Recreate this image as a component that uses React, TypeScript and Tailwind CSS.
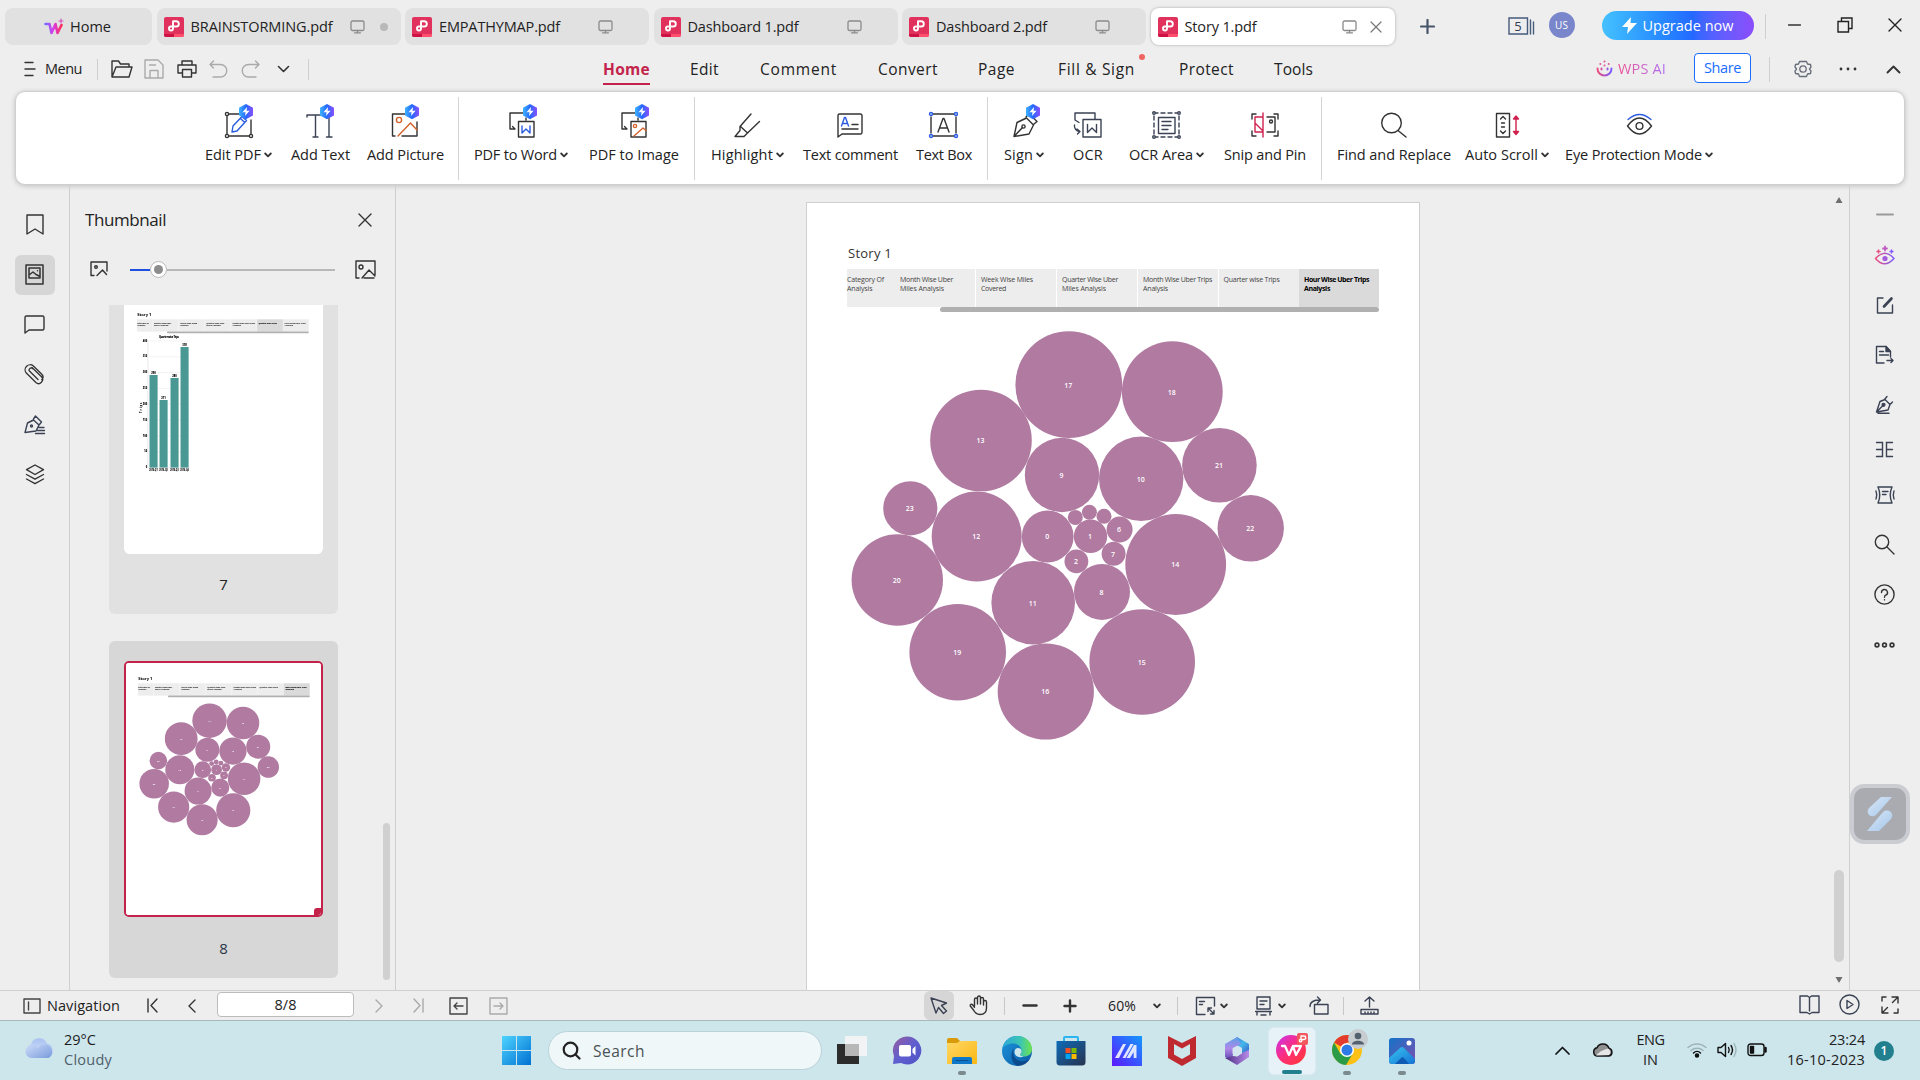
import React, { useLayoutEffect, useRef } from 'react';

/** Single line of text whose letter spacing is adjusted to fill the width set by its classes. */
function Fit({ children, className = '' }: { children: string; className?: string }) {
  const outer = useRef<HTMLDivElement>(null);
  const inner = useRef<HTMLSpanElement>(null);
  useLayoutEffect(() => {
    const o = outer.current;
    const s = inner.current;
    if (!o || !s) return;
    s.style.letterSpacing = '0px';
    const box = o.getBoundingClientRect().width;
    const scale = box / o.offsetWidth || 1;
    const gap = (box - s.getBoundingClientRect().width) / scale / children.length;
    s.style.letterSpacing = gap.toFixed(3) + 'px';
  }, [children]);
  return (
    <div ref={outer} className={'shrink-0 whitespace-nowrap ' + className}>
      <span ref={inner} className="inline-block">{children}</span>
    </div>
  );
}

type SvgProps = { w: number; h: number; c?: string; s?: string; sw?: number; children: React.ReactNode; box?: string };
function Svg({ w, h, c = '', s = '#333', sw = 1.4, children, box }: SvgProps) {
  return (
    <svg width={w} height={h} viewBox={box || `0 0 ${w} ${h}`} className={'shrink-0 ' + c} fill="none" stroke={s} strokeWidth={sw} strokeLinecap="round" strokeLinejoin="round">
      {children}
    </svg>
  );
}

const Gradients = () => (
  <svg width="0" height="0" className="absolute">
    <defs>
      <linearGradient id="badge" x1="0" x2="1"><stop offset="0" stopColor="#3fb4ff" /><stop offset=".5" stopColor="#2468ff" /><stop offset="1" stopColor="#8b50ff" /></linearGradient>
      <linearGradient id="wps" x1="0" x2="1"><stop offset="0" stopColor="#7a6cff" /><stop offset=".5" stopColor="#d83ce8" /><stop offset="1" stopColor="#ff2d55" /></linearGradient>
      <linearGradient id="ai" x1="0" x2="1"><stop offset="0" stopColor="#f04e7a" /><stop offset="1" stopColor="#7a5cff" /></linearGradient>
      <linearGradient id="cloud" x1="0" y1="0" x2="0" y2="1"><stop offset="0" stopColor="#a9c2f2" /><stop offset="1" stopColor="#dbe4f9" /></linearGradient>
      <linearGradient id="cloud2" x1="0" y1="0" x2="1" y2="1"><stop offset="0" stopColor="#d4e0fa" /><stop offset="1" stopColor="#5f88d4" /></linearGradient>
      <linearGradient id="win" gradientUnits="userSpaceOnUse" x1="0" y1="0" x2="29" y2="29"><stop offset="0" stopColor="#4fd4ff" /><stop offset="1" stopColor="#0070d2" /></linearGradient>
      <linearGradient id="chat" x1="0" y1="0" x2="1" y2="1"><stop offset="0" stopColor="#9a5a9c" /><stop offset=".5" stopColor="#5f5fd0" /><stop offset="1" stopColor="#4f52c4" /></linearGradient>
      <linearGradient id="folder" x1="0" y1="0" x2="1" y2="1"><stop offset="0" stopColor="#ffd766" /><stop offset="1" stopColor="#fbb813" /></linearGradient>
      <linearGradient id="edge1" x1="0" x2="1"><stop offset="0" stopColor="#2ba7d8" /><stop offset=".6" stopColor="#3cc5b4" /><stop offset="1" stopColor="#6fe34d" /></linearGradient>
      <linearGradient id="edge2" x1="0" y1="0" x2="1" y2="1"><stop offset="0" stopColor="#1c96dd" /><stop offset="1" stopColor="#0b5aa5" /></linearGradient>
      <linearGradient id="store" x1="0" y1="0" x2="1" y2="1"><stop offset="0" stopColor="#0e6cb8" /><stop offset="1" stopColor="#28324f" /></linearGradient>
      <linearGradient id="asus" x1="0" y1="1" x2="1" y2="0"><stop offset="0" stopColor="#5c18ff" /><stop offset="1" stopColor="#1398ff" /></linearGradient>
      <linearGradient id="wpsapp" x1="0" y1="0" x2="1" y2="1"><stop offset="0" stopColor="#c632f2" /><stop offset=".5" stopColor="#ff2d78" /><stop offset="1" stopColor="#ff3b30" /></linearGradient>
      <linearGradient id="photos" x1="0" y1="0" x2="1" y2="1"><stop offset="0" stopColor="#1273c8" /><stop offset="1" stopColor="#7e4fae" /></linearGradient>
      <linearGradient id="hill" x1="0" y1="0" x2="1" y2="1"><stop offset="0" stopColor="#36c5f0" /><stop offset="1" stopColor="#1672d4" /></linearGradient>
      <linearGradient id="glass" x1="0" y1="0" x2="1" y2="1"><stop offset="0" stopColor="#d9e8f6" /><stop offset="1" stopColor="#a5c6ec" /></linearGradient>
      <linearGradient id="m1" x1="0" y1="0" x2="1" y2="1"><stop offset="0" stopColor="#3a6fd8" /><stop offset=".5" stopColor="#43b8ea" /><stop offset="1" stopColor="#3a50c8" /></linearGradient>
      <linearGradient id="m2" x1="0" y1="0" x2="0" y2="1"><stop offset="0" stopColor="#5aa0e8" /><stop offset=".5" stopColor="#b088e8" /><stop offset="1" stopColor="#5c48b0" /></linearGradient>
      <linearGradient id="m3" x1="0" y1="0" x2="1" y2="0"><stop offset="0" stopColor="#4b2f86" /><stop offset="1" stopColor="#b98ae8" /></linearGradient>
    </defs>
  </svg>
);

const PdfIcon = () => (
  <Svg w={20} h={20} s="none">
    <rect width="20" height="20" rx="2" fill="#e0325c" />
    <path d="M0 17h10v3H2a2 2 0 0 1-2-2z" fill="#cf1244" />
    <path d="M10 17h10v1a2 2 0 0 1-2 2h-8z" fill="#ff4f6d" />
    <path d="M9 8.500V4.300h3.200a2.600 2.600 0 0 1 0 5.200H6.800a2 2 0 1 0 2.200 2V8" fill="none" stroke="#fff" strokeWidth="1.900" />
  </Svg>
);

const Monitor = ({ c }: { c: string }) => (
  <Svg w={15} h={14} s="#8b8b8b" sw={1.3} c={c}>
    <rect x="1" y="1" width="13" height="9.500" rx="1.500" /><path d="M7.500 10.500v2M4.500 12.800h6" />
  </Svg>
);

const tabs = [
  { name: 'BRAINSTORMING.pdf', w: 'w-[142px]', gap: 'ml-[17px]', dot: true },
  { name: 'EMPATHYMAP.pdf', w: 'w-[121px]', gap: 'ml-[38px]' },
  { name: 'Dashboard 1.pdf', w: 'w-[111px]', gap: 'ml-[48px]' },
  { name: 'Dashboard 2.pdf', w: 'w-[111px]', gap: 'ml-[48px]' },
  { name: 'Story 1.pdf', w: 'w-[72px]', gap: 'ml-[85px]', active: true },
];

function TitleBar() {
  return (
    <div className="flex h-[53px] items-center pl-[5px] text-[14.5px]">
      <div className="flex h-[37px] w-[147px] shrink-0 items-center rounded-lg bg-[#e1e1e1] pl-[39px]">
        <Svg w={20} h={18} s="url(#wps)" sw={2.6}>
          <path d="M1.500 6h4l2 9 4-9 2 9 4-8" /><path d="M17 1v4M15 3h4" strokeWidth="1.200" stroke="#d84fb8" />
        </Svg>
        <Fit className="ml-[6px] w-[41px]">Home</Fit>
      </div>
      {tabs.map((t) => (
        <div key={t.name} className={'ml-[4.5px] flex h-[37px] w-[244px] shrink-0 items-center rounded-lg pl-[7px] ' + (t.active ? 'bg-white shadow-[0_0_3px_rgba(0,0,0,0.3)]' : 'bg-[#e1e1e1]')}>
          <PdfIcon />
          <Fit className={'ml-[7px] ' + t.w}>{t.name}</Fit>
          <Monitor c={t.gap} />
          {t.dot && <div className="ml-[15px] size-2 rounded-full bg-[#b9b9b9]" />}
          {t.active && <Svg w={12} h={12} s="#777" sw={1.2} c="ml-[13px]"><path d="M1 1l10 10M11 1L1 11" /></Svg>}
        </div>
      ))}
      <Svg w={15} h={15} s="#475569" sw={2.2} c="ml-[25px]"><path d="M7.500 1v13M1 7.500h13" /></Svg>
      <Svg w={27} h={18} s="#475b7c" sw={1.4} c="mb-[2px] ml-[73px]"><path d="M1 1h18.500v16H1zM22.500 3v14M25.500 5v12" strokeLinejoin="miter" /><text x="10" y="14" textAnchor="middle" fontSize="13" fill="#334155" stroke="none">5</text></Svg>
      <div className="mb-[3px] ml-[14px] flex size-[26px] shrink-0 items-center justify-center rounded-full bg-[#7986cb] text-[10px] text-white">US</div>
      <div className="mb-[2px] ml-[27px] flex h-[29px] w-[152px] shrink-0 items-center rounded-full bg-linear-to-r from-[#45c1ff] via-[#2468ff] via-60% to-[#8b4dfb] pl-[20px] text-white">
        <Svg w={15} h={17} s="none"><path d="M9 0L0 10h6l-1 7 10-11H8.500z" fill="#fff" /></Svg>
        <Fit className="ml-[6px] w-[91px]">Upgrade now</Fit>
      </div>
      <div className="ml-[11px] h-[25px] w-px bg-[#cfcfcf]" />
      <Svg w={13} h={2} sw={1.5} c="mb-[4px] ml-[22px]"><path d="M.5 1h12" /></Svg>
      <Svg w={16} h={16} c="mb-[3px] ml-[36px]" s="#222"><path d="M1 4.500h10.500V15H1zM4.500 4.500V1H15v10.500h-3.500" strokeLinejoin="miter" /></Svg>
      <Svg w={14} h={14} c="mb-[3px] ml-[35px]" s="#222"><path d="M1 1l12 12M13 1L1 13" /></Svg>
    </div>
  );
}

const Caret = ({ c = '' }: { c?: string }) => (
  <Svg w={8} h={6} s="#333" sw={1.8} c={c}><path d="M1.200 1.500L4 4.300l2.800-2.800" /></Svg>
);

function MenuBar() {
  return (
    <div className="flex h-8 items-center text-[15.5px] text-[#222]">
      <Svg w={12} h={16} c="ml-[24px]"><path d="M1 1.500h8M1 8h10M1 14.500h8" /></Svg>
      <Fit className="ml-[9px] w-[37px] text-[14.5px]">Menu</Fit>
      <div className="ml-[15px] h-[21px] w-px bg-[#cfcfcf]" />
      <Svg w={22} h={18} c="ml-[13px]"><path d="M1 17V1h6.500l2 3H18v3M1 17L5 7h16l-3 10z" /></Svg>
      <Svg w={20} h={20} s="#aaa" c="ml-[11px]"><path d="M1 1h13l5 5v13H1zM6 19v-7.500h8V19M5.500 6h6" /></Svg>
      <Svg w={20} h={18} c="ml-[13px]"><path d="M5 5V1h10v4M5 13H1V5h18v8h-4M5.500 9.500h9V17h-9z" /></Svg>
      <Svg w={19} h={18} s="#aaa" c="ml-[12px]"><path d="M4.500 1L1 4.500 4.500 8M1 4.500h10.500a6.200 6.200 0 0 1 0 12.500H4" /></Svg>
      <Svg w={19} h={18} s="#aaa" c="ml-[13px]"><path d="M14.500 1L18 4.500 14.500 8M18 4.500H7.500a6.200 6.200 0 0 0 0 12.500H15" /></Svg>
      <Svg w={13} h={8} c="ml-[17px]" sw={1.6}><path d="M1.500 1.500l5 5 5-5" /></Svg>
      <div className="ml-[18px] h-[21px] w-px bg-[#cfcfcf]" />
      <div className="ml-[294px] flex h-8 shrink-0 items-center border-b-2 border-[#c3234b] pt-[3px] font-bold text-[#c3234b]"><Fit className="w-[47px]">Home</Fit></div>
      <div className="flex shrink-0 items-center pt-[2px]">
        <Fit className="ml-[40px] w-[29px]">Edit</Fit>
        <Fit className="ml-[41px] w-[77px]">Comment</Fit>
        <Fit className="ml-[41px] w-[60px]">Convert</Fit>
        <Fit className="ml-[40px] w-[37px]">Page</Fit>
        <Fit className="ml-[43px] w-[77px]">Fill &amp; Sign</Fit>
        <div className="mb-[26px] ml-[4px] size-[6px] rounded-full bg-[#f06461]" />
        <Fit className="ml-[34px] w-[55px]">Protect</Fit>
        <Fit className="ml-[40px] w-[39px]">Tools</Fit>
      </div>
      <Svg w={17} h={18} s="url(#ai)" sw={2} c="ml-[283px]">
        <path d="M1.500 8.500a7 7 0 0 0 14 0M5.500 8.500v1M11.500 8.500v1" /><path d="M8.500 1.500h.01M4.300 4h.01M12.700 4h.01M8.500 5.500h.01" stroke="#e0559a" />
      </Svg>
      <Fit className="ml-[5px] w-[48px] bg-linear-to-r from-[#ea4f94] to-[#b06cf2] bg-clip-text text-[14.5px] text-transparent">WPS AI</Fit>
      <div className="mb-[2px] ml-[28px] flex h-[30px] w-[57px] shrink-0 items-center rounded-[4px] border border-[#1a6dff] bg-white pl-[9px] text-[14.5px] text-[#1a6dff]"><Fit className="w-[37px]">Share</Fit></div>
      <div className="ml-[18px] h-[25px] w-px bg-[#cfcfcf]" />
      <Svg w={18} h={18} s="#666c78" c="ml-[24px]" sw={1.3}><path d="M5.500 1.500h7l1 2.500 3 .5.500 2.500-1.500 2 1.500 2-.5 2.500-3 .5-1 2.500h-7l-1-2.500-3-.5L1 11l1.500-2L1 7l.5-2.500 3-.5z" /><circle cx="9" cy="9" r="3.200" /></Svg>
      <Svg w={18} h={4} sw={2.800} c="ml-[27px]"><path d="M2 2h.01M9 2h.01M16 2h.01" /></Svg>
      <Svg w={15} h={9} sw={1.900} c="ml-[29px]"><path d="M1.500 7.500l6-6 6 6" /></Svg>
    </div>
  );
}

const Badge = ({ x = 16 }: { x?: number }) => (
  <g transform={`translate(${x} 1)`} stroke="none">
    <path d="M7 0l7 3.800v7.600L7 15.200 0 11.400V3.800z" fill="url(#badge)" stroke="none" />
    <path d="M8 3L3.500 8.300h3L6 12l4.600-5.300H7.600z" fill="#fff" />
  </g>
);

const Icon = ({ children, s = '#333', sw = 1.4 }: { children: React.ReactNode; s?: string; sw?: number }) => <Svg w={32} h={36} s={s} sw={sw}>{children}</Svg>;
const B = '#2b5be0';
const O = '#d4622a';
const R = '#d0214f';
const N = '#3a4254';

type Tool = { label: string; cell: string; text: string; caret?: boolean; icon: React.ReactNode };
const groups: Tool[][] = [
  [
    { label: 'Edit PDF', cell: 'ml-[189px] w-[66px]', text: 'w-[56px]', caret: true, icon: <Icon><path d="M7 11h10M5 13v18M7 33h20M29 17v14" /><g fill="#fff"><circle cx="5" cy="11" r="1.600" /><circle cx="5" cy="33" r="1.600" /><circle cx="29" cy="33" r="1.600" /></g><path d="M10 29l1-6L20 13.500l4.500 4L15 28zM18.500 15.500l4 3.800" stroke={B} /><Badge x={17} /></Icon> },
    { label: 'Add Text', cell: 'ml-[20px] w-[59px]', text: 'w-[59px]', icon: <Icon s={N}><path d="M2 14v-2h16M10.500 12v22M8 34h5M24 14v20M21.500 34h5.500" /><Badge x={15} /></Icon> },
    { label: 'Add Picture', cell: 'ml-[17px] w-[76px]', text: 'w-[77px]', icon: <Icon><path d="M16 11H3.500v22H6M13 33h15V19" /><circle cx="10" cy="17" r="2.600" stroke={O} /><path d="M9 33l12.500-13L28 27" stroke={O} /><Badge x={16} /></Icon> },
  ],
  [
    { label: 'PDF to Word', cell: 'ml-[15px] w-[94px]', text: 'w-[83px]', caret: true, icon: <Icon><path d="M18 10H5v16h5M7.500 23.500L10 26M21 15v2M13.500 18.500h15.500V34H13.500z" /><path d="M17 23v7l4-4 4 4v-7" stroke={B} /><Badge x={18} /></Icon> },
    { label: 'PDF to Image', cell: 'ml-[21px] w-[90px]', text: 'w-[90px]', icon: <Icon><path d="M17 10H4v16h5M6.500 23.500L9 26M20 15v2M13 18.500h15V34H13z" /><circle cx="17" cy="23" r="1.600" stroke={O} /><path d="M16 33l9-8 3 2.500" stroke={O} /><Badge x={17} /></Icon> },
  ],
  [
    { label: 'Highlight', cell: 'ml-[16px] w-[71px]', text: 'w-[62px]', caret: true, icon: <Icon><path d="M20 11L9 23.500v4L4 33.500h9l3.500-3.500L28.500 18.500M9.500 23.500l7 6.500" /></Icon> },
    { label: 'Text comment', cell: 'ml-[21px] w-[94px]', text: 'w-[95px]', icon: <Icon><path d="M4 34V12.500a1.500 1.500 0 0 1 1.500-1.500h21a1.500 1.500 0 0 1 1.500 1.500v17a1.500 1.500 0 0 1-1.500 1.500H8zM18 21.500h6M8 26h16" /><path d="M7.500 23l3-8.500h1l3 8.500M8.500 20.500h5" stroke={B} /></Icon> },
    { label: 'Text Box', cell: 'ml-[19px] mr-[1px] w-[55px]', text: 'w-[56px]', icon: <Icon><path d="M4.500 11h22M4.500 33h22M3 14v16M28 14v16" /><path d="M10 29l5-13.500h1l5 13.500M12 25h7.500" /><g stroke={B} fill="#fff"><circle cx="3" cy="11" r="1.500" /><circle cx="28" cy="11" r="1.500" /><circle cx="3" cy="33" r="1.500" /><circle cx="28" cy="33" r="1.500" /></g></Icon> },
  ],
  [
    { label: 'Sign', cell: 'ml-[16px] w-[39px]', text: 'w-[29px]', caret: true, icon: <Icon><path d="M6 33.500l3-14 9.500-4.500 7 7-4.500 9zM18 14l3-3.500 8 8-3.500 3M6 33.500l8.500-9" /><circle cx="15.500" cy="23.500" r="1.600" /><Badge x={18} /></Icon> },
    { label: 'OCR', cell: 'ml-[30px] w-[29px]', text: 'w-[30px]', icon: <Icon s={N}><path d="M3 17v-7h20v6M3 17l4 2.500M2.500 22a5.500 5.500 0 0 0 5 6.500M5 26l3 2.500L5.500 31M11 16.500h18V34H11z" /><path d="M15.500 21.500v8l4.500-4.500 4.500 4.500v-8" /></Icon> },
    { label: 'OCR Area', cell: 'ml-[27px] w-[74px]', text: 'w-[64px]', caret: true, icon: <Icon s={N}><path d="M4 10h25v24H4z" strokeDasharray="4 3" /><path d="M8.500 14.500H25v16H8.500zM12 18.500h9M12 22.500h9M12 26.500h6" /><g fill="#fff"><circle cx="4" cy="10" r="1.300" /><circle cx="29" cy="10" r="1.300" /><circle cx="4" cy="34" r="1.300" /><circle cx="29" cy="34" r="1.300" /></g></Icon> },
    { label: 'Snip and Pin', cell: 'ml-[21px] w-[82px]', text: 'w-[82px]', icon: <Icon><path d="M3 16v-5h4M3 28v5h4M25 11h4v5M29 28v5h-4M18 14h8v15h-8" /><circle cx="22" cy="18.500" r="1.500" /><path d="M14 10v24M14 14H6v15h8M6 20l8 8" stroke={R} /></Icon> },
  ],
  [
    { label: 'Find and Replace', cell: 'ml-[15px] w-[114px]', text: 'w-[114px]', icon: <Icon><circle cx="13.500" cy="20" r="9.800" /><path d="M20 27.500L28 34" /></Icon> },
    { label: 'Auto Scroll', cell: 'ml-[14px] w-[83px]', text: 'w-[73px]', caret: true, icon: <Icon><path d="M5.500 10.500h13V34h-13zM9.500 16l2.500-2.500 2.500 2.500M9.500 28l2.500 2.500 2.500-2.500M10.500 20h3M10.500 24h3" /><path d="M25 14v16M22.500 16l2.500-3 2.500 3zM22.500 28.500l2.500 3 2.500-3z" stroke={R} fill={R} /></Icon> },
    { label: 'Eye Protection Mode', cell: 'ml-[17px] w-[147px]', text: 'w-[137px]', caret: true, icon: <Icon><path d="M4.500 23q12-16 24 0-12 16-24 0z" /><circle cx="16.500" cy="23" r="3.400" /><path d="M5 16.500q11.500-10 23 0" stroke={B} /></Icon> },
  ],
];

function Ribbon() {
  return (
    <div className="mx-[15px] mt-[6px] flex h-[94px] shrink-0 rounded-[10px] border border-[#cfcfcf] bg-white shadow-[0_1px_5px_rgba(0,0,0,0.2)]">
      {groups.map((g, i) => (
        <React.Fragment key={i}>
          {i > 0 && <div className={'mt-[5px] h-[83px] w-px shrink-0 bg-[#d4d4d4] ' + (i === 2 || i === 4 ? 'ml-[15px]' : i === 1 ? 'ml-[15px]' : 'ml-[15px]')} />}
          {g.map((t) => (
            <div key={t.label} className={'flex shrink-0 flex-col items-center pt-[11px] ' + t.cell}>
              {t.icon}
              <div className="mt-[6px] flex w-full items-center text-[14.5px] leading-5">
                <Fit className={t.text}>{t.label}</Fit>
                {t.caret && <Caret c="ml-[3px]" />}
              </div>
            </div>
          ))}
        </React.Fragment>
      ))}
    </div>
  );
}

const bubbles: [string, number, number, number][] = [
  ['23', 910.3, 508.3, 27.1], ['12', 976.7, 536.5, 45], ['0', 1047.7, 536.5, 25.9], ['', 1075.3, 517.4, 7.5], ['', 1089.4, 512.2, 7.5],
  ['', 1104, 516.2, 7.5], ['1', 1090.5, 536.3, 16.7], ['6', 1119.6, 529.6, 13], ['7', 1113.6, 553.7, 12], ['2', 1076.4, 561.3, 11.9],
  ['8', 1102, 592, 28], ['14', 1175.7, 564.5, 50.4], ['22', 1250.7, 528.3, 33.2], ['20', 897.3, 580, 45.7], ['19', 957.7, 652.2, 48.3],
  ['16', 1045.8, 691.5, 48.1], ['15', 1142.2, 662, 52.8], ['11', 1033.2, 602.7, 41.8], ['17', 1068.8, 384.7, 53.4],
  ['18', 1172.3, 391.7, 50.4], ['13', 981, 440.5, 50.8], ['9', 1062, 475, 37.2], ['10', 1141.2, 478.8, 42.2], ['21', 1219.4, 465.2, 37.3],
];

const Bubbles = () => (
  <svg width="612" height="680" viewBox="807 312 612 680" className="shrink-0">
    {bubbles.map(([n, x, y, r], i) => (
      <g key={i}>
        <circle cx={x} cy={y} r={r} fill="#b07aa1" />
        <text x={x - 0.5} y={y + 2.8} textAnchor="middle" fontSize="7" fontWeight="600" fill="#fff">{n}</text>
      </g>
    ))}
  </svg>
);

const bars: [number, number, string, string][] = [[79, 375, '290', '2016-Q1'], [110, 400, '211', '2016-Q2'], [144, 378, '280', '2016-Q3'], [175, 347, '378', '2016-Q4']];
const BarChart = () => (
  <svg width="612" height="680" viewBox="0 109 612 680" className="shrink-0" fontSize="8" fontWeight="800" fill="#000">
    <text x="139" y="124" textAnchor="middle" textLength="62">Quarter wise Trips</text>
    {[0, 1, 2, 3, 4, 5, 6, 7, 8].map((i) => (
      <g key={i}>
        <path d={`M74 ${525 - i * 49}h130`} stroke="#ececec" strokeWidth="2" />
        <text x="72" y={527 - i * 49} textAnchor="end">{i * 50}</text>
      </g>
    ))}
    <path d="M74 133v392" stroke="#ddd" strokeWidth="2" />
    {bars.map(([x, top, v, q]) => {
      const y = (top - 298) / 0.323;
      return (
        <g key={q}>
          <rect x={x} y={y} width="25" height={525 - y} fill="#499894" />
          <text x={x + 12.5} y={y - 3} textAnchor="middle">{v}</text>
          <text x={x + 12.5} y="537" textAnchor="middle" textLength="26" lengthAdjust="spacingAndGlyphs">{q}</text>
        </g>
      );
    })}
    <text x="0" y="0" transform="translate(56 340) rotate(-90)" textAnchor="middle" textLength="32">Trips</text>
  </svg>
);

const stories: { cell: string; lines: [string, string][] }[] = [
  { cell: 'w-[47.5px]', lines: [['Category Of', 'w-[37px]'], ['Analysis', 'w-[25.5px]']] },
  { cell: 'w-[81px] pl-[5.5px] border-r', lines: [['Month Wise Uber', 'w-[53px]'], ['Miles Analysis', 'w-[44px]']] },
  { cell: 'w-[81px] pl-[5.5px] border-r', lines: [['Week Wise Miles', 'w-[52px]'], ['Covered', 'w-[25px]']] },
  { cell: 'w-[81px] pl-[5.5px] border-r', lines: [['Quarter Wise Uber', 'w-[56px]'], ['Miles Analysis', 'w-[44px]']] },
  { cell: 'w-[81px] pl-[5.5px] border-r', lines: [['Month Wise Uber Trips', 'w-[69px]'], ['Analysis', 'w-[25px]']] },
  { cell: 'w-[80.5px] pl-[5px]', lines: [['Quarter wise Trips', 'w-[56px]']] },
  { cell: 'w-[80px] pl-[5px]', lines: [['Hour Wise Uber Trips', 'w-[65px]'], ['Analysis', 'w-[26px]']] },
];

function Page({ selected, thumb, children }: { selected: number; thumb?: boolean; children: React.ReactNode }) {
  return (
    <div className="flex h-[792px] w-[612px] shrink-0 flex-col overflow-hidden bg-white">
      <Fit className={'mt-[42px] ml-[41px] w-[44px] text-[13px] leading-4 ' + (thumb ? 'font-bold text-black' : 'text-[#333]')}>Story 1</Fit>
      <div className="mt-[8px] ml-[40px] flex h-[38px] shrink-0">
        {stories.map((s, i) => (
          <div key={i} className={'h-full shrink-0 border-white pt-[6px] text-[7px] leading-[9px] ' + s.cell + (i === selected ? ' bg-[#dadada] text-black ' : ' bg-[#ededed] ') + (thumb ? (i === selected ? 'font-extrabold' : 'font-bold text-[#222]') : i === selected ? 'font-bold' : 'text-[#444]')}>
            {s.lines.map(([t, w]) => <Fit key={t} className={w}>{t}</Fit>)}
          </div>
        ))}
      </div>
      <div className="ml-[133px] h-[5px] w-[439px] shrink-0 rounded-full bg-[#b0b0b0]" />
      {children}
    </div>
  );
}

const railIcons = [
  <Svg w={18} h={21} s="#333"><path d="M1 1h16v19l-8-5-8 5z" /></Svg>,
  <Svg w={19} h={21} s="#333" sw={1.5}><path d="M1 1h17v19H1zM4 4h11v10H4zM4 11l4-3 3 2.500 4 2M12.500 6.800h.01" /></Svg>,
  <Svg w={21} h={19} s="#333"><path d="M1 18V2.500A1.500 1.500 0 0 1 2.500 1h16A1.500 1.500 0 0 1 20 2.500v11a1.500 1.500 0 0 1-1.500 1.500H5z" /></Svg>,
  <Svg w={21} h={21} s="#333" sw={1.3}><path d="M8 3.500l9.500 9.300a4 4 0 0 1-5.600 5.700L2.300 9A5 5 0 0 1 9.400 2l8.400 8.200a4 4 0 0 1 0 5.500M14 15.500L5.700 7.300a1.900 1.900 0 0 1 2.700-2.700" /></Svg>,
  <Svg w={22} h={20} s={N}><path d="M1 17.500L3.500 8l6-3 5.500 5-3 6zM9.500 4l2-3 6 6-2 2.500M15 12.500h5M13.500 15.500h7M11.500 18.500h9" /><circle cx="7.500" cy="11" r="1" /></Svg>,
  <Svg w={20} h={21} s="#333"><path d="M10 1l8.500 4.700L10 10.500 1.500 5.700zM1.500 10.500l8.500 4.700 8.500-4.700M1.500 15l8.500 4.700 8.500-4.700" /></Svg>,
];

function LeftPanel() {
  return (
    <>
      <div className="flex w-[70px] shrink-0 flex-col items-center border-r border-[#cfcfcf] pt-[15px]">
        {railIcons.map((ic, i) => (
          <div key={i} className="flex h-[50px] items-center justify-center">
            <div className={'flex size-10 items-center justify-center rounded-md pb-[1px] ' + (i === 1 ? 'bg-[#d6d6d6]' : '')}>{ic}</div>
          </div>
        ))}
      </div>
      <div className="flex w-[326px] shrink-0 flex-col border-r border-[#cfcfcf]">
        <div className="mt-[20px] flex h-[30px] items-center pl-[15px] text-[17px]">
          <Fit className="w-[81px]">Thumbnail</Fit>
          <Svg w={14} h={14} c="ml-[192px]"><path d="M1 1l12 12M13 1L1 13" /></Svg>
        </div>
        <div className="mt-[14px] flex h-[41px] items-center pl-[20px]">
          <Svg w={18} h={16} c="mb-[1px]"><path d="M4 14.500H1V1h16v9M7 14.500l5.500-5.500 4 4.500" /><circle cx="6" cy="6" r="1.300" /></Svg>
          <div className="ml-[22px] flex h-4 w-[205px] items-center">
            <div className="h-[2px] w-[20px] bg-[#1f4fe0]" />
            <div className="flex size-[17px] items-center justify-center rounded-full border border-[#b8b8b8] bg-white"><div className="size-[9px] rounded-full bg-[#8c8c8c]" /></div>
            <div className="h-[2px] flex-1 bg-[#b8b8b8]" />
          </div>
          <Svg w={21} h={19} c="ml-[20px]"><path d="M4 18H1V1h19v14M7 18l7-8 6 6M9 18h10" /><circle cx="6" cy="7" r="2" /></Svg>
        </div>
        <div className="mt-[15px] flex h-[685px] overflow-hidden">
          <div className="ml-[39px] w-[229px]">
            <div className="flex h-[309px] flex-col items-center rounded-b-md bg-[#e1e1e1]">
              <div className="flex h-[249px] w-[199px] flex-col justify-end overflow-hidden rounded-b-md bg-white">
                <div className="h-[256px] w-[198px] shrink-0"><div className="h-[792px] w-[612px] origin-top-left scale-[0.323]"><Page selected={5} thumb><BarChart /></Page></div></div>
              </div>
              <div className="mt-[18px] text-[15px] leading-6">7</div>
            </div>
            <div className="mt-[27px] flex h-[337px] flex-col items-center rounded-md bg-[#d7d7d7] pt-[20px]">
              <div className="relative h-[256px] w-[199px] overflow-hidden rounded-[5px] border-2 border-[#c3234b] bg-white">
                <div className="-mt-px -ml-px h-[792px] w-[612px] origin-top-left scale-[0.323]"><Page selected={6} thumb><Bubbles /></Page></div>
                <div className="absolute right-0 bottom-0 size-[7px] rounded-tl-[3px] bg-[#c3234b]" />
              </div>
              <div className="mt-[19px] text-[15px] leading-6 text-[#2c3648]">8</div>
            </div>
          </div>
          <div className="mt-[518px] ml-[45px] h-[157px] w-[7px] rounded-full bg-[#d0d0d0]" />
        </div>
      </div>
    </>
  );
}

const sideTools: { h: string; icon: React.ReactNode }[] = [
  { h: 'h-[40px]', icon: <Svg w={18} h={3} s="#999" sw={2}><path d="M1 1.500h16" /></Svg> },
  { h: 'h-[40px]', icon: <Svg w={22} h={20} s="url(#ai)" sw={1.5}><path d="M1.500 13.500q9.500-10.500 18.500 0-9.500 10.500-18.500 0z" /><circle cx="11" cy="13.500" r="2.600" fill="#a45be0" stroke="none" /><path d="M11 1.500v4M9 3.500h4" stroke="#c05bc4" strokeWidth="1.800" /><path d="M4.500 5v3M3 6.500h3" stroke="#e55585" /><path d="M17.500 5v3M16 6.500h3" stroke="#8a5cff" /></Svg> },
  { h: 'h-[60px]', icon: <Svg w={18} h={18} s={N}><path d="M7 2H1.500v15h15V9" /><path d="M8 10.500l7.500-8" strokeWidth="2.600" /></Svg> },
  { h: 'h-[40px]', icon: <Svg w={19} h={19} s={N}><path d="M9 18H1.500V1.500h9.500l4.500 5V12M4.500 6.500h4M4.500 10h9M12 15.500h6M16 13.500l2 2-2 2" /><path d="M11 1.500l4.500 5H11z" fill={N} /></Svg> },
  { h: 'h-[60px]', icon: <Svg w={19} h={19} s={N}><path d="M1.500 17L5 6.500l5-2 5 5-2 5.500zM1.500 17l7-7M9.500 4.500L12 1.500M15 9.500L17.500 7M3 18.200h11" /><circle cx="8.500" cy="9.800" r="1.400" fill={N} /></Svg> },
  { h: 'h-[30px]', icon: <Svg w={19} h={17} s={N}><path d="M1.500 1.500h6v14h-6M1.500 8.500h6M17.500 1.500h-6v14h6M11.500 8.500h6" strokeLinejoin="miter" /></Svg> },
  { h: 'h-[60px]', icon: <Svg w={20} h={18} s={N}><path d="M3 1h14q-3.500 8 0 16H3q3.500-8 0-16zM1 5q1.500 4 0 8M19 5q-1.500 4 0 8M7.500 5.500h5.500M7.500 8.500h3.500" /></Svg> },
  { h: 'h-[40px]', icon: <Svg w={21} h={21}><circle cx="8" cy="8" r="6.700" /><path d="M13 13l7 7" /></Svg> },
  { h: 'h-[60px]', icon: <Svg w={21} h={21}><circle cx="10.500" cy="10.500" r="9.600" /><path d="M7.500 8.500a3 3 0 1 1 4.200 2.700c-.9.400-1.200.9-1.200 2M10.500 15.800v.1" /></Svg> },
  { h: 'h-[40px]', icon: <Svg w={21} h={6} sw={1.6}><circle cx="3" cy="3" r="1.900" /><circle cx="10.500" cy="3" r="1.900" /><circle cx="18" cy="3" r="1.900" /></Svg> },
];

function Body() {
  return (
    <div className="flex h-[805px] shrink-0">
      <LeftPanel />
      <div className="flex w-[1453px] shrink-0 overflow-hidden">
        <div className="mt-[17px] ml-[410px] h-[788px] w-[614px] shrink-0 overflow-hidden border border-b-0 border-[#cfcfcf]">
          <Page selected={6}><Bubbles /></Page>
        </div>
        <div className="ml-[414px] flex w-[10px] shrink-0 flex-col items-center pt-[12px]">
          <Svg w={8} h={6} s="none"><path d="M4 0l3.500 6h-7z" fill="#6e6e6e" /></Svg>
          <div className="mt-[667px] h-[92px] w-[10px] rounded-full bg-[#d0d0d0]" />
          <Svg w={8} h={6} s="none" c="mt-[15px]"><path d="M4 6L.5 0h7z" fill="#6e6e6e" /></Svg>
        </div>
      </div>
      <div className="flex w-[71px] shrink-0 flex-col border-l border-[#cfcfcf] pt-[9.5px]">
        {sideTools.map((t, i) => (
          <div key={i} className={'flex w-[69px] items-center justify-center ' + t.h}>{t.icon}</div>
        ))}
      </div>
    </div>
  );
}

const Sep = ({ c }: { c: string }) => <div className={'h-[18px] w-px shrink-0 bg-[#c8c8c8] ' + c} />;

function StatusBar() {
  return (
    <div className="flex h-[30px] shrink-0 items-center border-t border-[#cfcfcf] text-[14.5px]">
      <Svg w={18} h={16} c="ml-[23px]" s="#444"><path d="M1 1h16v14H1zM5.500 4v8" /></Svg>
      <Fit className="ml-[6px] w-[73px]">Navigation</Fit>
      <Svg w={11} h={15} c="ml-[27px]"><path d="M1 1v13M10 1L4 7.500l6 6.500" /></Svg>
      <Svg w={8} h={14} c="ml-[30px]"><path d="M7 1L1 7l6 6" /></Svg>
      <div className="mb-[2px] ml-[21px] flex h-[25px] w-[137px] shrink-0 items-center justify-center rounded-[4px] border border-[#bcbcbc] bg-white"><Fit className="w-[22px]">8/8</Fit></div>
      <Svg w={8} h={14} s="#aaa" c="ml-[21px]"><path d="M1 1l6 6-6 6" /></Svg>
      <Svg w={11} h={15} s="#aaa" c="ml-[30px]"><path d="M10 1v13M1 1l6 6.500L1 14" /></Svg>
      <Svg w={19} h={18} s="#444" c="ml-[25px]"><path d="M1 1h17v16H1zM14 9H5M8 6L5 9l3 3" /></Svg>
      <Svg w={19} h={18} s="#aaa" c="ml-[21px]"><path d="M1 1h17v16H1zM5 9h9M11 6l3 3-3 3" /></Svg>
      <div className="ml-[416px] flex h-[29px] w-[30px] shrink-0 items-center justify-center rounded-md bg-[#d6d6d6]">
        <Svg w={18} h={18} s={N}><path d="M1 1l5 15 2.500-5.500 5 6 3-2.500-5-5.500L16.500 6z" /></Svg>
      </div>
      <Svg w={19} h={21} c="ml-[15px]"><path d="M5.500 11V4.500a1.500 1.500 0 0 1 3 0V9M8.500 9V2.500a1.500 1.500 0 0 1 3 0V9M11.500 9V4a1.500 1.500 0 0 1 3 0v6M14.500 9V7a1.500 1.500 0 0 1 3 0v6c0 4-2.500 6.500-6.500 6.500-3.500 0-5-1.500-6.500-4.500L1.300 11c-.5-1.500 1.200-2.300 2.200-1.200l2 2.400" /></Svg>
      <Sep c="ml-[16px]" />
      <Svg w={16} h={3} sw={2.4} c="ml-[17px]"><path d="M1.500 1.500h13" /></Svg>
      <Svg w={14} h={14} sw={2.4} c="ml-[25px]"><path d="M7 1.500v11M1.500 7h11" /></Svg>
      <Fit className="ml-[31px] w-[28px] text-[14px]">60%</Fit>
      <Caret c="ml-[17px]" />
      <Sep c="ml-[16px]" />
      <Svg w={21} h={20} s={N} c="ml-[17px]"><path d="M10 18.500H1.500v-17h18V10M4.500 5.500h5M4.500 8.500h3M13 12l6 6M13 15.500V12h3.500M19 14.500V18h-3.500" /></Svg>
      <Caret c="ml-[4px]" />
      <Svg w={17} h={20} s={N} c="ml-[27px]"><path d="M2 1h13v12H2zM5 5h7M5 8.500h4M.5 15.500h16M2 19v-3.500M15 19v-3.500M6 19h5" /></Svg>
      <Caret c="ml-[6px]" />
      <Svg w={20} h={19} s={N} c="ml-[23px]"><path d="M5.500 8.500H19V18H5.500zM1 10.500C1 5.500 5 4 11 4M8.500 1L11.500 4l-3 3" /></Svg>
      <Sep c="ml-[14px]" />
      <Svg w={19} h={19} s={N} c="ml-[16px]"><path d="M9.500 11V1M5 5l4.500-4L14 5M1 13.500h17V18H1zM5 16v2M8 16v2M11 16v2M14 16v2" /></Svg>
      <Svg w={21} h={20} s={N} c="mb-[2px] ml-[420px]"><path d="M1 1h7.500l2 1.500 2-1.500H20v16.500h-7l-2.500 1.500L8 17.500H1zM10.500 2.500V16" /></Svg>
      <Svg w={21} h={21} s={N} c="mb-[2px] ml-[19px]"><circle cx="10.500" cy="10.500" r="9.500" /><path d="M8 6.500v8l6-4z" /></Svg>
      <Svg w={18} h={18} c="mb-[2px] ml-[21px]"><path d="M1 5V1h4M17 13v4h-4M11 1h6v6M17 1l-5.500 5.500M7 17H1v-6M1 17l5.500-5.500" /></Svg>
    </div>
  );
}

const Dot = () => <div className="absolute bottom-[5px] left-1/2 h-[4px] w-[8px] -translate-x-1/2 rounded-full bg-[#7b8a8d]" />;
const AppIcon = ({ c, children, dot }: { c: string; children: React.ReactNode; dot?: boolean }) => (
  <div className={'relative flex h-[59px] w-[32px] shrink-0 items-center justify-center ' + c}>{children}{dot && <Dot />}</div>
);

function Taskbar() {
  return (
    <div className="flex h-[60px] shrink-0 items-center border-t border-[#a7b8bd] bg-[#cde6ec] text-[14.5px]">
      <Svg w={32} h={24} s="none" c="mb-[6px] ml-[24px]"><path d="M8 22a7 7 0 0 1-1-13.500 8.500 8.500 0 0 1 16-1A7.500 7.500 0 0 1 24 22z" fill="url(#cloud)" /><path d="M16 21a7 7 0 0 1 5-12.500A7.200 7.200 0 0 1 24.500 22H8A6.500 6.500 0 1 1 13 11.500q4 2 3 9.500z" fill="url(#cloud2)" opacity=".8" /></Svg>
      <div className="ml-[8px] flex flex-col pb-[1px] leading-5">
        <Fit className="w-[32px] text-[#1c1c1c]">29°C</Fit>
        <Fit className="w-[48px] text-[#50606a]">Cloudy</Fit>
      </div>
      <Svg w={29} h={29} s="none" c="ml-[390px]"><path d="M0 0h14v14H0zM15 0h14v14H15zM0 15h14v14H0zM15 15h14v14H15z" fill="url(#win)" /></Svg>
      <div className="ml-[17px] flex h-[39px] w-[274px] shrink-0 items-center rounded-full border border-[#b9d2d9] bg-[#eff7f9] pl-[13px] text-[#4a5255]">
        <Svg w={19} h={19} s="#222" sw={2.2}><circle cx="8.500" cy="8.500" r="6.800" /><path d="M13.500 13.500l4 4" /></Svg>
        <Fit className="ml-[12px] w-[52px] pt-[2px] text-[15.5px]">Search</Fit>
      </div>
      <AppIcon c="ml-[14px]"><Svg w={30} h={29} s="none"><path d="M0 8h22v20H0z" fill="#2c2c2c" /><path d="M8 0h22v20H8z" fill="#f4f4f4" opacity=".92" /><path d="M8 8h14v12H8z" fill="#b7b7b7" /></Svg></AppIcon>
      <AppIcon c="ml-[23px]"><Svg w={30} h={29} s="none"><path d="M15 .5a14 14 0 1 1-6 26.500L1 28l1-8A14 14 0 0 1 15 .5z" fill="url(#chat)" /><rect x="7" y="9" width="12" height="11.500" rx="2" fill="#fff" /><path d="M20.500 13l3-3v9.500l-3-3z" fill="#fff" /></Svg></AppIcon>
      <AppIcon c="ml-[23px]" dot><Svg w={30} h={28} s="none"><path d="M0 3a2 2 0 0 1 2-2h8l3 3v4H0z" fill="#d99a0c" /><path d="M0 6h10l3-2h17v22a1 1 0 0 1-1 1H1a1 1 0 0 1-1-1z" fill="url(#folder)" /><path d="M5 22a2 2 0 0 1 2-2h16a2 2 0 0 1 2 2v5H5z" fill="#0f78c9" /><path d="M9 23.500h12" stroke="#0a4f8f" strokeWidth="1.200" /></Svg></AppIcon>
      <AppIcon c="ml-[23px]"><Svg w={30} h={30} s="none"><circle cx="15" cy="15" r="15" fill="url(#edge2)" /><path d="M.5 12C2 5 8 0 15 0c9 0 15 6 15 13 0 5-4 7.500-8 7.500-3 0-4-1.200-4-2.200 1-1.300 1.500-2 1.500-3.500C19.500 10 15 7.500 11 7.500 6 7.500 2 10 .5 12z" fill="url(#edge1)" /><path d="M12 12.500c-2 6 1 11 6 12.500 4 1 8-.5 10-2.500-2 4.500-7 7.500-12 7.500-6-1.500-9-12-4-17.500z" fill="#0b3f80" opacity=".75" /><path d="M19.500 15c0 1.300-.5 2-1.500 3.300 0 1 1 2.200 4 2.200-5 2-9.500-.5-9.500-4.500 0-2.500 1.500-4 3.500-4s3.500 1.300 3.500 3z" fill="#cde6ec" /></Svg></AppIcon>
      <AppIcon c="ml-[22px]"><Svg w={30} h={30} s="none"><path d="M8 6V2a1 1 0 0 1 1-1h12a1 1 0 0 1 1 1v4" fill="none" stroke="#29b6f0" strokeWidth="2" /><path d="M.5 5h29v21a3.500 3.500 0 0 1-3.500 3.500H4A3.500 3.500 0 0 1 .5 26z" fill="url(#store)" /><path d="M9.500 12h5v5h-5z" fill="#f25022" /><path d="M15.500 12h5v5h-5z" fill="#7fba00" /><path d="M9.500 18h5v5h-5z" fill="#00a4ef" /><path d="M15.500 18h5v5h-5z" fill="#ffb900" /></Svg></AppIcon>
      <AppIcon c="ml-[24px]"><Svg w={30} h={30} s="none"><path d="M0 0h30v30H0z" fill="url(#asus)" /><path d="M3 22L11 8h3L7 22zM10.500 22l8-14h3l-8 14z" fill="#fff" opacity=".85" /><path d="M14.500 22L22 9h2.500v13h-2.800v-6l-3.700 6z" fill="#dfe6ff" /></Svg></AppIcon>
      <AppIcon c="ml-[23px]"><Svg w={28} h={30} s="none"><path d="M0 0l14 7L28 0v22l-14 8-14-8zM6 8v10.500l8 4.500 8-4.500V8l-8 4.500z" fillRule="evenodd" fill="#bf2a30" /></Svg></AppIcon>
      <AppIcon c="ml-[23px]"><Svg w={28} h={30} s="none"><path d="M14 1l12 7v12l-7-3v-5L9 6z" fill="url(#m1)" /><path d="M14 1L2 8v13l7 3 1-6v-6l8-4z" fill="url(#m2)" /><path d="M26 14v7l-12 8-12-7 8-2 4 .500 6-4z" fill="url(#m3)" /><path d="M14 10l4.500 2.500v5L14 20.500l-4.500-3v-5z" fill="#d3e6f0" /></Svg></AppIcon>
      <div className="relative ml-[15px] flex size-[48px] shrink-0 items-center justify-center rounded-md border border-[#dcebf0] bg-[#e6f2f7]">
        <Svg w={32} h={34} s="none" c="mb-[4px]"><circle cx="15" cy="18" r="15" fill="url(#wpsapp)" /><path d="M6 14h3l4 9 4-9 3 9 5-9h-7" stroke="#fff" strokeWidth="2.300" fill="none" /><rect x="21" y="1" width="11" height="12" rx="2" fill="#f2565e" /><path d="M25 7V4h3a1.500 1.500 0 0 1 0 3.500h-3.500a1.200 1.200 0 1 0 1.300 1.300" stroke="#fff" fill="none" /></Svg>
        <div className="absolute bottom-0 left-[13px] h-[4px] w-[20px] rounded-full bg-[#22808e]" />
      </div>
      <div className="relative ml-[15px] flex h-[59px] w-[32px] shrink-0 items-center">
        <Svg w={38} h={38} s="none" c="mb-[8px]"><circle cx="16" cy="22" r="15" fill="#fbc116" /><path d="M16 22L3 14.500A15 15 0 0 1 29 14.500H16z" fill="#e33b2e" /><path d="M16 22l-6.500 4L3 14.500A15 15 0 0 0 15 37l6.500-11z" fill="#2a9c48" /><circle cx="16" cy="22" r="7" fill="#fff" /><circle cx="16" cy="22" r="5.500" fill="#2e7be8" /><circle cx="27" cy="11" r="10" fill="#c7ccd1" /><circle cx="27" cy="8" r="3.300" fill="#53606d" /><path d="M21 16.500c0-5 12-5 12 0z" fill="#53606d" /></Svg>
        <Dot />
      </div>
      <AppIcon c="ml-[23px]" dot><Svg w={26} h={26} s="none"><rect width="26" height="26" rx="3" fill="url(#photos)" /><path d="M0 20L11 10a3 3 0 0 1 4 0l11 11v2a3 3 0 0 1-3 3H3a3 3 0 0 1-3-3z" fill="url(#hill)" /><path d="M6 26l6-6a2 2 0 0 1 3 0l5 6z" fill="#0f5cb4" /><circle cx="20" cy="5" r="2.500" fill="#fff" /></Svg></AppIcon>
      <Svg w={15} h={9} s="#111" sw={1.7} c="ml-[137px]"><path d="M1 8l6.500-6.500L14 8" /></Svg>
      <Svg w={22} h={15} s="#111" sw={1.5} c="mb-[3px] ml-[22px]"><path d="M5 14a4.200 4.200 0 0 1 0-8.200 6.500 6.500 0 0 1 12 .5A4 4 0 0 1 17 14z" fill="#909090" /><path d="M4 13.500q4-5 12-7a4 4 0 0 1 1 6.500z" fill="#e6e6e6" stroke="none" /></Svg>
      <div className="ml-[22px] flex w-[29px] shrink-0 flex-col items-center pb-[1px] leading-5">
        <Fit className="w-[28px]">ENG</Fit><Fit className="w-[15px]">IN</Fit>
      </div>
      <Svg w={20} h={16} s="#111" sw={1.5} c="mb-[2px] ml-[22px]"><path d="M1 5.500a13 13 0 0 1 18 0M4 8.500a9 9 0 0 1 12 0" stroke="#9db4ba" /><path d="M6.500 11a5 5 0 0 1 7 0" /><circle cx="10" cy="13.500" r="1.500" fill="#111" /></Svg>
      <Svg w={21} h={16} s="#111" c="mb-[2px] ml-[10px]"><path d="M1 5.500h3l4.500-4v13l-4.500-4H1zM11.500 5.500q1.500 2.500 0 5M14 3.500q3 4.500 0 9" /><path d="M17 1.500q4 6.500 0 13" stroke="#9db4ba" /></Svg>
      <Svg w={21} h={14} s="#111" c="mb-[2px] ml-[9px]"><rect x="1" y="1" width="16" height="11.500" rx="2.500" /><path d="M3.500 3.500h3v6.500h-3z" fill="#111" /><path d="M18.500 5v3.500" strokeWidth="2.500" /></Svg>
      <div className="ml-[19px] flex shrink-0 flex-col items-end pb-[2px] leading-5">
        <Fit className="w-[36px]">23:24</Fit><Fit className="w-[78px]">16-10-2023</Fit>
      </div>
      <div className="ml-[9px] flex size-[20px] shrink-0 items-center justify-center rounded-full bg-[#22808e] text-[12px] font-semibold text-white">1</div>
    </div>
  );
}

export default function App() {
  return (
    <div className="relative flex h-[1080px] w-[1920px] flex-col overflow-hidden bg-[#eee] font-['Open_Sans','Noto_Sans',sans-serif] text-[#222]">
      <Gradients />
      <TitleBar />
      <MenuBar />
      <Ribbon />
      <Body />
      <StatusBar />
      <Taskbar />
      <div className="absolute top-[784px] left-[1850px] flex size-[60px] items-center justify-center rounded-[14px] border-4 border-[#cbccd1] bg-[#aaabb1]">
        <Svg w={26} h={34} s="none"><path d="M14 0h11L9 18c-5 4-11-2-7-7z" fill="url(#glass)" /><path d="M12 34H0l16-19c5-4 12 1 8 7z" fill="url(#glass)" /></Svg>
      </div>
    </div>
  );
}
